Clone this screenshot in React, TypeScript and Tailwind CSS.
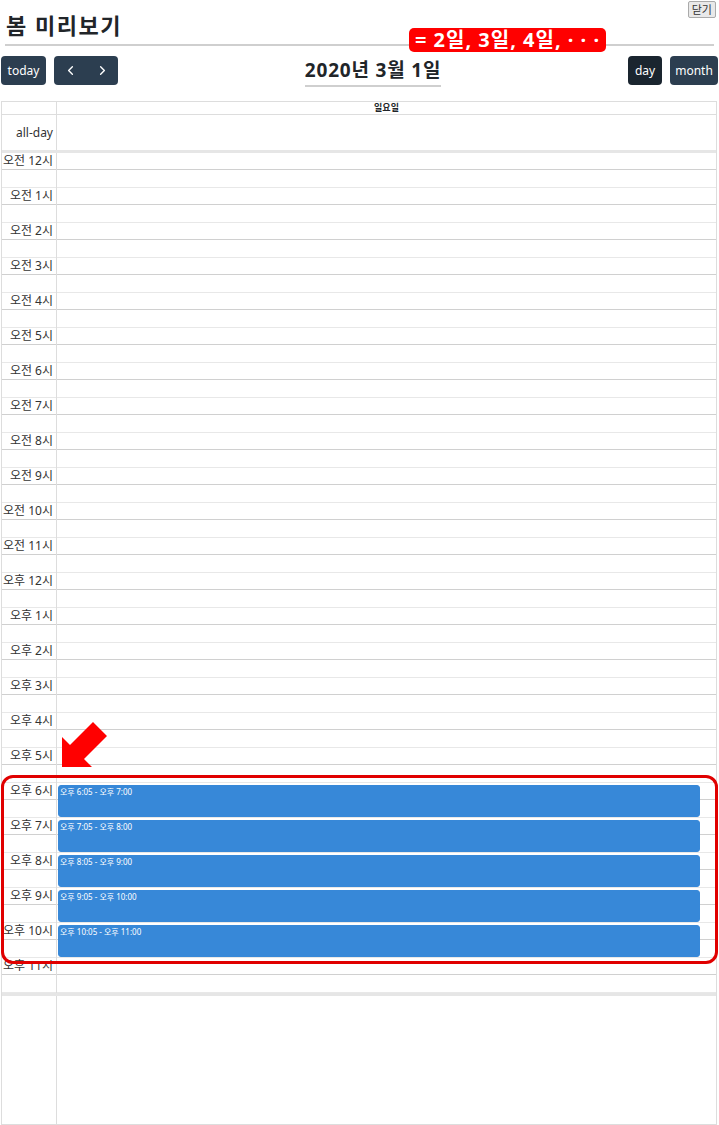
import { ChevronLeft, ChevronRight } from "lucide-react";

const FONT = {
  fontFamily: '"Noto Sans", "Noto Sans CJK KR", sans-serif',
};

function hourLabel(h: number) {
  const ampm = h < 12 ? "오전" : "오후";
  const n = h % 12 === 0 ? 12 : h % 12;
  return `${ampm} ${n}시`;
}

const HOURS = Array.from({ length: 24 }, (_, i) => i);

// events start at hh:05 and end at next hour
const EVENTS = [18, 19, 20, 21, 22].map((h) => ({
  hour: h,
  label: `오후 ${h - 12}:05 - 오후 ${h - 11}:00`,
}));

export default function App() {
  return (
    <div
      className="relative w-[719px] h-[1125px] overflow-hidden bg-white text-[#212529]"
      style={FONT}
    >
      {/* header */}
      <div className="mx-[5px] h-[46px] border-b-2 border-[#cfcfcf] flex items-end">
        <h1 className="text-[22px] font-bold leading-none pb-[8px] pl-[1px] tracking-[1.5px]">
          봄 미리보기
        </h1>
      </div>
      <button className="absolute top-[1px] right-[3px] h-[17px] px-[3px] text-[11px] leading-none bg-[#e9e9e9] border border-[#aaa] rounded-[2px] text-[#333]">
        닫기
      </button>

      {/* toolbar */}
      <div className="mt-[10px] px-[1px] flex items-center justify-between h-[29px]">
        <div className="flex items-center gap-[8px]">
          <button className="h-[29px] w-[45px] rounded-[4px] bg-[#2c3e50] text-white text-[12px]">
            today
          </button>
          <div className="flex">
            <button className="h-[29px] w-[32px] rounded-l-[4px] bg-[#2c3e50] text-white flex items-center justify-center">
              <ChevronLeft size={15} strokeWidth={2.2} />
            </button>
            <button className="h-[29px] w-[32px] rounded-r-[4px] bg-[#2c3e50] text-white flex items-center justify-center">
              <ChevronRight size={15} strokeWidth={2.2} />
            </button>
          </div>
        </div>
        <h2 className="text-[19px] font-bold leading-none pt-[4px] pb-[5px] border-b-2 border-[#cfcfcf] mt-[2px] tracking-[0.8px]">
          2020년 3월 1일
        </h2>
        <div className="flex items-center gap-[8px]">
          <button className="h-[29px] w-[34px] rounded-[4px] bg-[#1a252f] text-white text-[12px]">
            day
          </button>
          <button className="h-[29px] w-[48px] rounded-[4px] bg-[#2c3e50] text-white text-[12px]">
            month
          </button>
        </div>
      </div>

      {/* calendar */}
      <div className="mt-[16px] ml-[1px] w-[716px] border border-[#ddd] h-[1024px] flex flex-col">
        <div className="flex h-[13px] border-b border-[#ddd]">
          <div className="w-[55px] border-r border-[#ddd]" />
          <div className="flex-1 text-center text-[9px] font-bold leading-[12px]">일요일</div>
        </div>
        <div className="flex h-[35px]">
          <div className="w-[55px] border-r border-[#ddd] flex items-center justify-end pr-[3px] text-[12px] text-[#333]">
            all-day
          </div>
          <div className="flex-1" />
        </div>
        <div className="h-[3px] bg-[#e6e6e6]" />

        <div className="flex">
          <div className="w-[55px] border-r border-[#ddd]">
            {HOURS.map((h) => (
              <div key={h} className="h-[35px] flex flex-col">
                <div className="h-[17px] border-b border-[#d0d0d0] flex items-center justify-end pr-[3px] text-[12px] leading-none text-[#333] whitespace-nowrap">
                  {hourLabel(h)}
                </div>
                <div className="h-[18px] border-b border-[#e8e8e8]" />
              </div>
            ))}
          </div>
          <div className="relative flex-1">
            {HOURS.map((h) => (
              <div key={h} className="h-[35px] flex flex-col">
                <div className="h-[17px] border-b border-[#d0d0d0]" />
                <div className="h-[18px] border-b border-[#e8e8e8]" />
              </div>
            ))}
            {EVENTS.map((ev) => (
              <div
                key={ev.hour}
                className="absolute left-[1px] right-[16px] h-[32px] rounded-[3px] bg-[#3788d8] border border-[#3788d8] text-white text-[8px] leading-[11px] px-[1px]"
                style={{ top: ev.hour * 35 + 2 }}
              >
                {ev.label}
              </div>
            ))}
          </div>
        </div>

        <div className="h-[3px] bg-[#e6e6e6]" />
        <div className="flex flex-1">
          <div className="w-[55px] border-r border-[#ddd]" />
          <div className="flex-1" />
        </div>
      </div>

      {/* annotations */}
      <div className="absolute left-[409px] top-[28px] h-[24px] w-[197px] rounded-[5px] bg-[#ff0000] text-white text-[20px] font-bold leading-none flex items-center justify-center whitespace-nowrap tracking-[1px]">
        = 2일, 3일, 4일, · · ·
      </div>
      <div className="absolute left-[1px] top-[775px] w-[717px] h-[189px] border-[3px] border-[#e00000] rounded-[12px] pointer-events-none" />
      <svg className="absolute left-0 top-0 pointer-events-none" width="719" height="1125">
        <polygon
          points="62,767 62,737 70,745 93,722 107,736 84,759 92,767"
          fill="#ff0000"
        />
      </svg>
    </div>
  );
}
